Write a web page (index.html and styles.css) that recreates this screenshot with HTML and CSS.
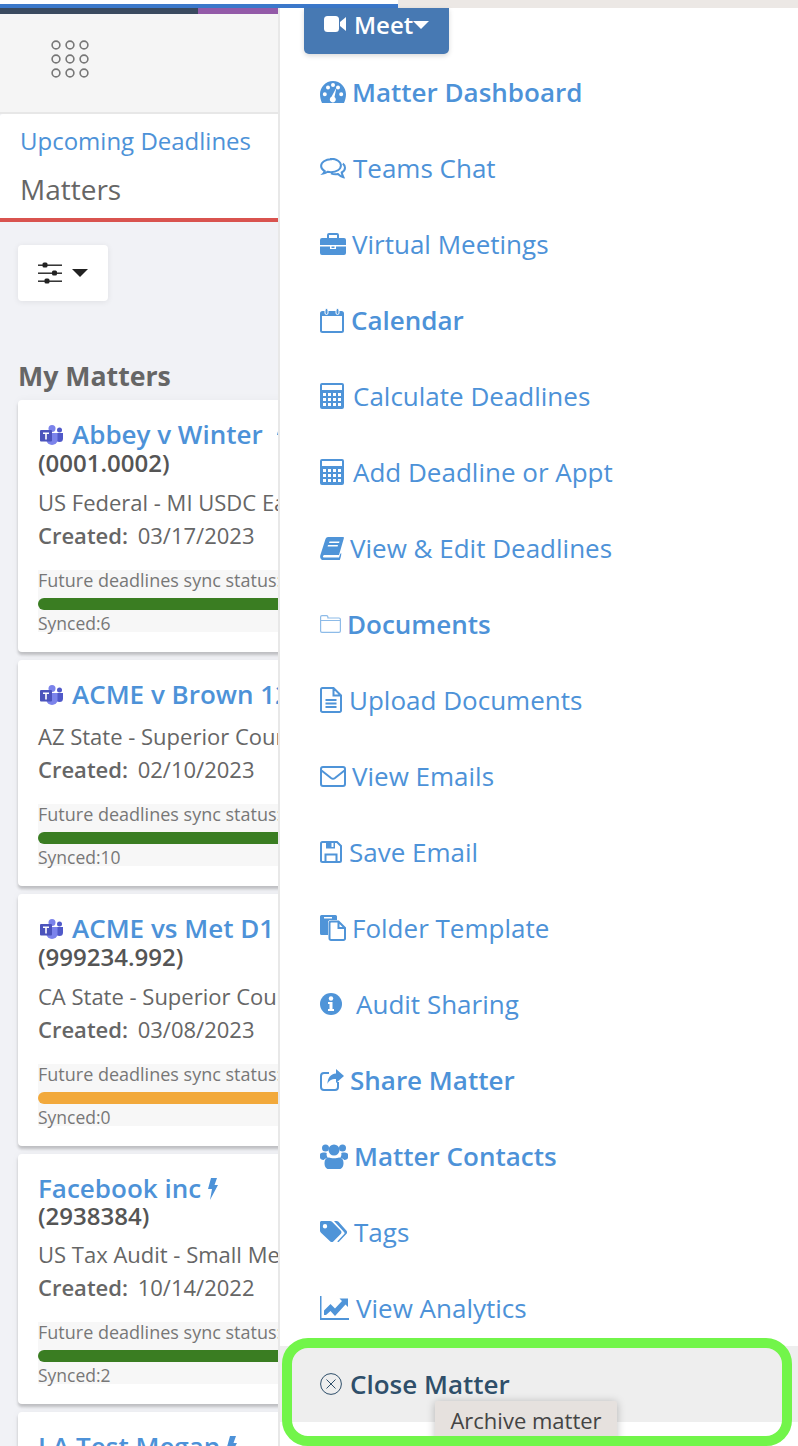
FILE: index.html
```html
<!DOCTYPE html>
<html lang="en">
<head>
<meta charset="utf-8">
<title>Matters</title>
<link rel="stylesheet" href="styles.css">
</head>
<body>
<div class="page">
  <div class="top-strip"><div class="top-progress"></div><div class="top-rest"></div></div>
  <div class="columns">
    <aside class="sidebar">
      <div class="accent"><div class="accent-dark"></div><div class="accent-purple"></div></div>
      <div class="app-head">
        <svg class="grid-icon" width="40" height="40" viewBox="0 0 40 40"><g fill="none" stroke="#777" stroke-width="1.6"><circle cx="6" cy="6" r="3.9"/><circle cx="20" cy="6" r="3.9"/><circle cx="34" cy="6" r="3.9"/><circle cx="6" cy="20" r="3.9"/><circle cx="20" cy="20" r="3.9"/><circle cx="34" cy="20" r="3.9"/><circle cx="6" cy="34" r="3.9"/><circle cx="20" cy="34" r="3.9"/><circle cx="34" cy="34" r="3.9"/></g></svg>
      </div>
      <nav class="tabs">
        <a class="tab-link">Upcoming Deadlines</a>
        <div class="tab-active">Matters</div>
      </nav>
      <div class="content">
        <button class="filter-btn">
          <svg width="24" height="22" viewBox="0 0 24 22"><g fill="#222"><rect y="2.500" width="24" height="1.400"/><rect x="4.500" y="0.500" width="5" height="5" rx="1.500"/><rect y="10.500" width="24" height="1.400"/><rect x="14" y="8.500" width="5" height="5" rx="1.500"/><rect y="18.500" width="24" height="1.400"/><rect x="6.500" y="16.500" width="5" height="5" rx="1.500"/></g></svg>
          <span class="caret-dark"></span>
        </button>
        <h2 class="list-title">My Matters</h2>

        <article class="card">
          <div class="card-title"><svg class="teams" width="24" height="20" viewBox="0 0 24 20"><circle cx="19.500" cy="5" r="2.500" fill="#5059c9"/><path d="M15 8h8v5.500a3.500 3.500 0 0 1-7 0z" fill="#5059c9"/><circle cx="12" cy="3.500" r="3.500" fill="#7b83eb"/><path d="M6.500 8h11v7a5.500 5 0 0 1-11 0z" fill="#7b83eb"/><rect x="0" y="5" width="12" height="11.500" rx="1" fill="#4b53bc"/><path d="M3 7.500h6v1.500H6.800v5.500H5.200V9H3z" fill="#fff"/></svg><span>Abbey v Winter</span><svg class="bolt bolt-far" width="12" height="22" viewBox="0 0 12 22"><path d="M4 0h6L7.500 7H11L3 22l2-11H1z"/></svg></div>
          <div class="card-code">(0001.0002)</div>
          <div class="card-court">US Federal - MI USDC Eastern</div>
          <div class="card-created"><b>Created:</b> 03/17/2023</div>
          <div class="sync"><div class="sync-label">Future deadlines sync status:</div><div class="bar bar-green"></div><div class="sync-count">Synced:6</div></div>
        </article>

        <article class="card">
          <div class="card-title"><svg class="teams" width="24" height="20" viewBox="0 0 24 20"><circle cx="19.500" cy="5" r="2.500" fill="#5059c9"/><path d="M15 8h8v5.500a3.500 3.500 0 0 1-7 0z" fill="#5059c9"/><circle cx="12" cy="3.500" r="3.500" fill="#7b83eb"/><path d="M6.500 8h11v7a5.500 5 0 0 1-11 0z" fill="#7b83eb"/><rect x="0" y="5" width="12" height="11.500" rx="1" fill="#4b53bc"/><path d="M3 7.500h6v1.500H6.800v5.500H5.200V9H3z" fill="#fff"/></svg><span>ACME v Brown 123</span></div>
          <div class="card-court">AZ State - Superior Court</div>
          <div class="card-created"><b>Created:</b> 02/10/2023</div>
          <div class="sync"><div class="sync-label">Future deadlines sync status:</div><div class="bar bar-green"></div><div class="sync-count">Synced:10</div></div>
        </article>

        <article class="card">
          <div class="card-title"><svg class="teams" width="24" height="20" viewBox="0 0 24 20"><circle cx="19.500" cy="5" r="2.500" fill="#5059c9"/><path d="M15 8h8v5.500a3.500 3.500 0 0 1-7 0z" fill="#5059c9"/><circle cx="12" cy="3.500" r="3.500" fill="#7b83eb"/><path d="M6.500 8h11v7a5.500 5 0 0 1-11 0z" fill="#7b83eb"/><rect x="0" y="5" width="12" height="11.500" rx="1" fill="#4b53bc"/><path d="M3 7.500h6v1.500H6.800v5.500H5.200V9H3z" fill="#fff"/></svg><span>ACME vs Met D1</span></div>
          <div class="card-code">(999234.992)</div>
          <div class="card-court">CA State - Superior Court</div>
          <div class="card-created"><b>Created:</b> 03/08/2023</div>
          <div class="sync"><div class="sync-label">Future deadlines sync status:</div><div class="bar bar-orange"></div><div class="sync-count">Synced:0</div></div>
        </article>

        <article class="card">
          <div class="card-title"><span>Facebook inc</span><svg class="bolt" width="12" height="22" viewBox="0 0 12 22"><path d="M4 0h6L7.500 7H11L3 22l2-11H1z"/></svg></div>
          <div class="card-code card-code-tight">(2938384)</div>
          <div class="card-court">US Tax Audit - Small Medium</div>
          <div class="card-created"><b>Created:</b> 10/14/2022</div>
          <div class="sync"><div class="sync-label">Future deadlines sync status:</div><div class="bar bar-green"></div><div class="sync-count">Synced:2</div></div>
        </article>

        <article class="card">
          <div class="card-title"><span>LA Test Megan</span><svg class="bolt" width="12" height="22" viewBox="0 0 12 22"><path d="M4 0h6L7.500 7H11L3 22l2-11H1z"/></svg></div>
        </article>
      </div>
    </aside>

    <main class="menu">
      <button class="meet-btn">
        <svg width="22" height="16" viewBox="0 0 22 16"><rect y="0" width="15" height="16" rx="3.500" fill="#fff"/><path d="M16 6l6-5v14l-6-5z" fill="#fff"/></svg>
        <span>Meet</span><span class="caret-white"></span>
      </button>
      <ul class="menu-list">
        <li class="item strong"><svg width="26" height="22" viewBox="0 0 26 22"><path fill-rule="evenodd" d="M13 0C5.800 0 0 6 0 13.300c0 3.200.8 6 2 8.700h22c1.200-2.700 2-5.500 2-8.700C26 6 20.200 0 13 0zM4.800 15.200a2 2 0 1 1 0-4 2 2 0 0 1 0 4zM8 8.500a2 2 0 1 1 0-4 2 2 0 0 1 0 4zm5-2.500a2 2 0 1 1 0-4 2 2 0 0 1 0 4zm5 2.500a2 2 0 1 1 0-4 2 2 0 0 1 0 4zm3.200 6.700a2 2 0 1 1 0-4 2 2 0 0 1 0 4z"/><path d="M16.500 6.500l-2 9.500a3 3 0 1 1-3-.2z" fill="#fff"/></svg><span>Matter Dashboard</span></li>
        <li class="item gap-7"><svg width="26" height="21" viewBox="0 0 26 21"><path class="line" d="M11 1.200C5.500 1.200 1.100 4.300 1.100 8c0 2.100 1.400 3.900 3.600 5.100-.3 1-.8 1.800-1.500 2.500 1.800-.3 3.300-1 4.400-1.800 1.200.3 2.400.4 3.400.4 5.500 0 9.900-3 9.900-6.700s-4.400-6.800-9.900-6.800z"/><path class="line" d="M22.800 5.600c1.400 1.100 2.200 2.500 2.200 4.100 0 2-1.300 3.700-3.300 4.800.2 1.500 1 3.200 1.700 4.700-2.300-.5-4.200-2-5.400-3.200-2.300.5-5 .2-7-.7"/></svg><span>Teams Chat</span></li>
        <li class="item"><svg width="26" height="22" viewBox="0 0 26 22"><path fill-rule="evenodd" d="M9 0h8a2 2 0 0 1 2 2v3h5a2 2 0 0 1 2 2v5H0V7a2 2 0 0 1 2-2h5V2a2 2 0 0 1 2-2zm0 2v3h8V2zM0 13.500h10V16h6v-2.500h10V20a2 2 0 0 1-2 2H2a2 2 0 0 1-2-2zM11.500 13.500h3V15h-3z"/></svg><span>Virtual Meetings</span></li>
        <li class="item strong gap-7"><svg width="24" height="25" viewBox="0 0 24 25"><rect class="line" x="1" y="4" width="22" height="20" rx="1.500"/><path d="M1 4h22v4H1z"/><rect x="5" y="0.500" width="3" height="6" rx="1.500" stroke="#fff"/><rect x="16" y="0.500" width="3" height="6" rx="1.500" stroke="#fff"/></svg><span>Calendar</span></li>
        <li class="item gap-9"><svg width="24" height="26" viewBox="0 0 24 26"><path fill-rule="evenodd" d="M2 0h20a2 2 0 0 1 2 2v22a2 2 0 0 1-2 2H2a2 2 0 0 1-2-2V2a2 2 0 0 1 2-2zm0 2v5h20V2zm1 8v3h3v-3zm5 0v3h3v-3zm5 0v3h3v-3zm5 0v3h3v-3zM3 15v3h3v-3zm5 0v3h3v-3zm5 0v3h3v-3zm5 0v3h3v-3zM3 20v3h3v-3zm5 0v3h3v-3zm5 0v3h3v-3zm5 0v3h3v-3z"/></svg><span>Calculate Deadlines</span></li>
        <li class="item gap-9"><svg width="24" height="26" viewBox="0 0 24 26"><path fill-rule="evenodd" d="M2 0h20a2 2 0 0 1 2 2v22a2 2 0 0 1-2 2H2a2 2 0 0 1-2-2V2a2 2 0 0 1 2-2zm0 2v5h20V2zm1 8v3h3v-3zm5 0v3h3v-3zm5 0v3h3v-3zm5 0v3h3v-3zM3 15v3h3v-3zm5 0v3h3v-3zm5 0v3h3v-3zm5 0v3h3v-3zM3 20v3h3v-3zm5 0v3h3v-3zm5 0v3h3v-3zm5 0v3h3v-3z"/></svg><span>Add Deadline or Appt</span></li>
        <li class="item"><svg width="24" height="23" viewBox="0 0 24 23"><path d="M8 0h15c1 0 1 .8.800 1.500L19 18H5c-2 0-2.500 1.500-1.500 2.500H19l1.200-3.500 1-1c.3 2-.6 5-1.200 6.500-.2.500-.5 1-1.200 1H4c-3 0-4.500-2.800-3.600-5.500L5.500 2C6 .8 7 0 8 0zm1.500 4.500l-.4 1.500h10l.4-1.500zM8 8l-.4 1.500h10L18 8z"/></svg><span>View &amp; Edit Deadlines</span></li>
        <li class="item strong"><svg width="21" height="18" viewBox="0 0 21 18"><path class="hair" d="M.6 16V2c0-.8.6-1.400 1.400-1.400h4.500c.8 0 1.400.6 1.400 1.400v1h11.100c.8 0 1.400.6 1.400 1.400V16c0 .8-.6 1.400-1.400 1.400H2c-.8 0-1.400-.6-1.400-1.400zM.6 5.500h19.800"/></svg><span>Documents</span></li>
        <li class="item gap-7"><svg width="22" height="26" viewBox="0 0 22 26"><path class="line" d="M2.500 1h11L21 8.500V23.500a1.500 1.500 0 0 1-1.500 1.500h-17A1.500 1.500 0 0 1 1 23.500v-21A1.500 1.500 0 0 1 2.500 1zM13.500 1v7.500H21M5.500 13h11M5.500 16.500h11M5.500 20h11"/></svg><span>Upload Documents</span></li>
        <li class="item"><svg width="26" height="21" viewBox="0 0 26 21"><rect class="line" x="1" y="1" width="24" height="19" rx="2"/><path class="line" d="M1.500 4.500L11 12c1.200.9 2.800.9 4 0l9.500-7.500"/></svg><span>View Emails</span></li>
        <li class="item gap-7"><svg width="22" height="22" viewBox="0 0 22 22"><path class="line" d="M2.500 1H17l4 4v14.500a1.500 1.500 0 0 1-1.500 1.500h-17A1.500 1.500 0 0 1 1 19.500v-17A1.500 1.500 0 0 1 2.500 1zM5.500 21v-7.500h11V21"/><path d="M6 1h9v6.500H6z"/><path d="M11.500 2h2v4h-2z" fill="#fff"/></svg><span>Save Email</span></li>
        <li class="item"><svg width="26" height="26" viewBox="0 0 26 26"><path d="M1.500 0h14A1.500 1.500 0 0 1 17 1.500V5h-6.500C9 5 8 6 8 7.500V20H1.500A1.500 1.500 0 0 1 0 18.500v-17A1.500 1.500 0 0 1 1.500 0z"/><path class="line" d="M11 6.500h7.500L25 13v10.500a1.500 1.500 0 0 1-1.500 1.500H11a1.500 1.500 0 0 1-1.500-1.500V8A1.500 1.500 0 0 1 11 6.500zM18.500 6.500V13H25"/><path d="M4 2h8v1.500H4z" fill="#fff"/></svg><span>Folder Template</span></li>
        <li class="item gap-14"><svg width="22" height="22" viewBox="0 0 22 22"><circle cx="11" cy="11" r="11"/><circle cx="11" cy="5.500" r="2.200" fill="#fff"/><path d="M8 9h4.500v7H14v2H8v-2h1.500v-5H8z" fill="#fff"/></svg><span>Audit Sharing</span></li>
        <li class="item strong"><svg width="24" height="22" viewBox="0 0 24 22"><path class="line" d="M18 13v5a3 3 0 0 1-3 3H4a3 3 0 0 1-3-3V7a3 3 0 0 1 3-3h5"/><path d="M16 0l8 7-8 7v-4c-5 0-7 1.500-8.500 5 0-6 3-10 8.500-10.500z"/></svg><span>Share Matter</span></li>
        <li class="item strong"><svg width="28" height="26" viewBox="0 0 28 26"><circle cx="5.500" cy="5" r="3.500"/><circle cx="22.500" cy="5" r="3.500"/><circle cx="14" cy="7" r="5.500"/><path d="M0 11.500C0 10 2 9.500 5 9.500c.8 0 1.300.3 1.800.6-.5 1.200-.2 3.200 1 4.600C6 15 4.500 16 3.800 17 1.500 16.800 0 16 0 14.500zM28 11.500c0-1.500-2-2-5-2-.8 0-1.300.3-1.800.6.500 1.200.2 3.200-1 4.600 1.800.3 3.300 1.300 4 2.300 2.300-.2 3.800-1 3.800-2.500z"/><path d="M9 14.500c1.500 1 8.500 1 10 0 3 0 4.500 2 4.500 5.500 0 3.500-1.500 6-4 6H8.500c-2.500 0-4-2.500-4-6 0-3.500 1.500-5.500 4.500-5.500z"/></svg><span>Matter Contacts</span></li>
        <li class="item gap-7"><svg width="27" height="22" viewBox="0 0 27 22"><path fill-rule="evenodd" d="M1.500 0H10c.8 0 1.500.3 2 .8l8.900 9c.8.800.8 2.200 0 3l-7.600 7.700c-.8.800-2.200.8-3 0L1 11.700c-.6-.6-1-1.200-1-2V1.500C0 .7.700 0 1.500 0zM5 3a2.200 2.200 0 1 0 0 4.400A2.200 2.200 0 0 0 5 3z"/><path d="M14 0h2.500c.8 0 1.400.3 2 .8l8 8.900c.8.900.8 2.200 0 3.100l-7.300 7.700c-.6.700-1.500.6-2 .1l7-7.500c.5-.6.500-1.200 0-1.800z"/></svg><span>Tags</span></li>
        <li class="item gap-7"><svg width="29" height="24" viewBox="0 0 29 24"><path d="M0 0h1.500v22H29v2H0z"/><path d="M4 19V14.500L10.500 8l4.500 4.500L22 5l-2.500-2.500H28v8.500L25.500 8.500 15 20l-4.500-5-4.500 4z"/></svg><span>View Analytics</span></li>
        <li class="item item-close gap-8"><svg width="22" height="22" viewBox="0 0 22 22"><circle class="hair-dark" cx="11" cy="11" r="10.400"/><path class="hair-dark" d="M6.500 6.500l9 9M15.500 6.500l-9 9"/></svg><span>Close Matter</span></li>
      </ul>
    </main>
  </div>
  <div class="tooltip">Archive matter</div>
  <div class="ring"></div>
</div>
</body>
</html>
```

FILE: styles.css
```css
* { box-sizing: border-box; }
html, body { margin: 0; padding: 0; }
body { font-family: "Open Sans", "Liberation Sans", sans-serif; background: #fff; color: #666; }
.page { position: relative; width: 798px; height: 1446px; overflow: hidden; display: flex; flex-direction: column; }

.top-strip { display: flex; height: 8px; flex: none; }
.top-progress { width: 398px; border-bottom: 4px solid #3b78ca; background: #fff; }
.top-rest { flex: 1; background: #ece8e5; }

.columns { display: flex; flex: 1; min-height: 0; }

.sidebar { width: 278px; flex: none; overflow: hidden; background: #f1f2f6; }
.accent { display: flex; height: 6px; }
.accent-dark { width: 198px; background: #3a4a5f; }
.accent-purple { flex: 1; background: #935aa8; }
.app-head { height: 100px; padding: 25px 0 0 50px; background: #f5f5f5; border-bottom: 2px solid #e7e7e7; }
.grid-icon { display: block; }
.tabs { height: 108px; padding: 9px 0 0 20px; background: #fff; border-bottom: 4px solid #d9534f; border-radius: 3px 0 0 0; }
.tab-link { display: block; font-size: 24px; line-height: 36px; color: #4d92d8; }
.tab-active { font-size: 28px; line-height: 48px; margin-top: 6px; color: #666; }

.content { padding: 23px 0 0 18px; }
.filter-btn { display: flex; align-items: center; gap: 10px; width: 90px; height: 56px; padding: 0 0 0 20px; border: 0; background: #fff; border-radius: 4px; box-shadow: 0 1px 6px rgba(0,0,0,.08); }
.caret-dark { width: 0; height: 0; border-left: 8px solid transparent; border-right: 8px solid transparent; border-top: 8px solid #222; }
.list-title { margin: 57px 0 6px 0; font-size: 26.7px; line-height: 36px; font-weight: 700; color: #666; }

.card { width: 300px; margin-bottom: 8px; padding: 17px 20px 20px; background: #fff; border-radius: 4px; box-shadow: 0 3px 3px rgba(0,0,0,.2), 0 0 8px rgba(0,0,0,.04); white-space: nowrap; }
.card-title { display: flex; align-items: center; height: 34px; font-size: 26px; font-weight: 600; color: #4d92d8; }
.teams { flex: none; margin: 2px 8px 0 2px; }
.bolt { flex: none; margin: 2px 0 0 6px; fill: #4d92d8; }
.bolt-far { margin-left: 13px; }
.card-code { height: 26px; font-size: 24px; line-height: 24px; font-weight: 600; color: #555; }
.card-code-tight { height: 24px; line-height: 22px; }
.card-court { margin-top: 8px; font-size: 22px; line-height: 34px; color: #666; }
.card-created { margin-top: -1px; padding-bottom: 1px; font-size: 22px; line-height: 34px; color: #666; }
.card-created b { font-weight: 600; margin-right: 4px; }
.sync { height: 62px; margin-top: 17px; background: #f7f7f7; }
.sync-label { height: 28px; font-size: 18px; line-height: 20px; color: #777; }
.sync-count { height: 22px; padding-top: 3px; font-size: 17.5px; line-height: 20px; color: #777; }
.bar { height: 12px; border-radius: 6px 0 0 6px; }
.bar-green { background: #3a7d22; }
.bar-orange { background: #f2a93b; }

.menu { flex: 1; border-left: 2px solid #e8e8e8; background: #fff; }
.meet-btn { display: flex; align-items: center; width: 145px; height: 46px; margin: 0 0 0 24px; padding: 0 0 14px 20px; border: 0; border-radius: 0 0 5px 5px; background: #4779b3; color: #fff; font: 600 24px "Open Sans", sans-serif; box-shadow: 0 2px 5px rgba(0,0,0,.15); }
.meet-btn svg { margin-right: 8px; }
.caret-white { width: 0; height: 0; margin-top: 2px; border-left: 8px solid transparent; border-right: 8px solid transparent; border-top: 8px solid #fff; }
.menu-list { list-style: none; margin: 0; padding: 0; }
.item { display: flex; align-items: center; gap: 6px; height: 76px; padding-left: 40px; font-size: 26px; color: #4d92d8; white-space: nowrap; }
.item svg { flex: none; fill: #4f94d8; }
.strong { font-weight: 600; }
.gap-7 { gap: 7px; }
.gap-8 { gap: 8px; }
.gap-9 { gap: 9px; }
.gap-14 { gap: 14px; }
.item-close { font-weight: 600; color: #2f4f6a; background: #eee; }
.item .line { fill: none; stroke: #4f94d8; stroke-width: 2; }
.item .hair { fill: none; stroke: #8dbbe8; stroke-width: 1.2; }
.item .hair-dark { fill: none; stroke: #2f4f6a; stroke-width: 1; }

.tooltip { position: absolute; left: 435px; top: 1401px; width: 182px; height: 42px; padding-top: 3px; text-align: center; font-size: 22px; line-height: 32px; color: #444; background: #e6e1de; box-shadow: 0 1px 8px rgba(0,0,0,.25); border-radius: 2px; }
.ring { position: absolute; left: 282px; top: 1338px; width: 510px; height: 108px; border: 10px solid #72f54a; border-radius: 26px; }
```
